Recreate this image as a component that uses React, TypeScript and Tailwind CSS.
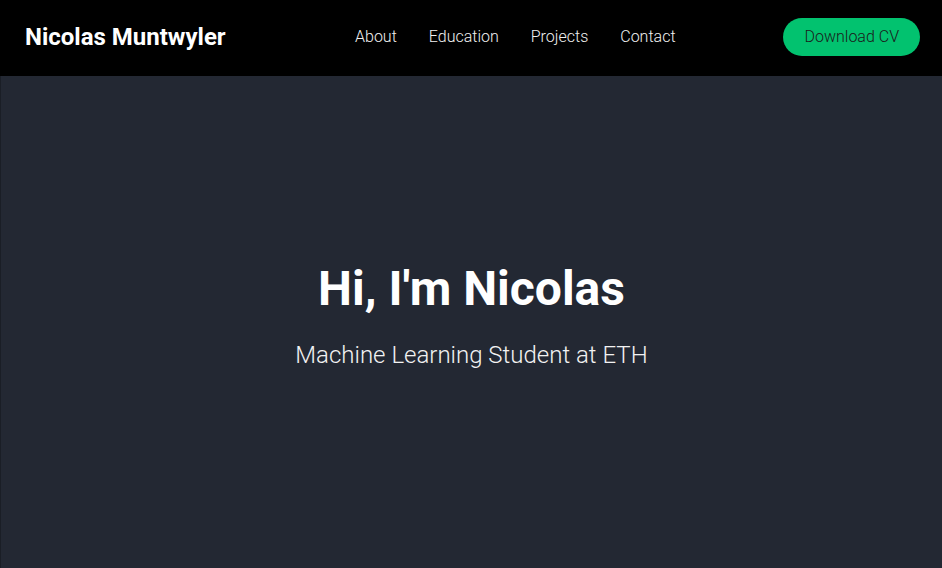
export default function App() {
  return (
    <div className="min-h-screen flex flex-col bg-[#232833] font-['Roboto',sans-serif]">
      <nav className="h-[76px] bg-black flex items-center pl-[25px] pr-[22px] pb-[2px]">
        <div className="text-white text-[24px] font-bold w-[330px]">Nicolas Muntwyler</div>
        <ul className="flex items-center gap-8 text-[16px] font-light text-[#f0f0f0]">
          <li>About</li>
          <li>Education</li>
          <li>Projects</li>
          <li>Contact</li>
        </ul>
        <div className="flex-1 flex justify-end">
          <button className="h-[38px] px-[21px] rounded-full bg-[#02c26f] text-[#1b1b1b] text-[16px] font-light">
            Download CV
          </button>
        </div>
      </nav>
      <section className="h-[492px] flex flex-col items-center justify-center pb-[12px] border-l border-[#1a1e26] text-white">
        <h1 className="text-[48px] font-bold leading-tight">Hi, I'm Nicolas</h1>
        <p className="mt-[18px] text-[24px] font-light text-[#f2f2f2]">Machine Learning Student at ETH</p>
      </section>
    </div>
  );
}
